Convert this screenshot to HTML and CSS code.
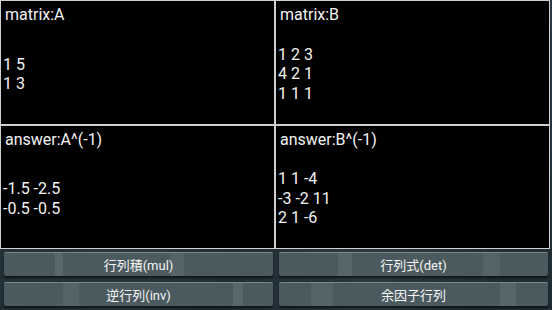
FILE: index.html
```html
<html>
    <head>
        <title>Matrix</title>
        <meta name="viewport" content="width=device-width, initial-scale=1.0">
        <link rel="stylesheet" href="styles.css">
    </head>
    <body>
        <div class="panels">
            <div class="panel">
                <div class="title">matrix:A</div>
                <div class="values">
                    <div>1 5</div>
                    <div>1 3</div>
                </div>
            </div>
            <div class="panel">
                <div class="title">matrix:B</div>
                <div class="values">
                    <div>1 2 3</div>
                    <div>4 2 1</div>
                    <div>1 1 1</div>
                </div>
            </div>
            <div class="panel">
                <div class="title">answer:A^(-1)</div>
                <div class="values">
                    <div>-1.5 -2.5</div>
                    <div>-0.5 -0.5</div>
                </div>
            </div>
            <div class="panel">
                <div class="title">answer:B^(-1)</div>
                <div class="values">
                    <div>1 1 -4</div>
                    <div>-3 -2 11</div>
                    <div>2 1 -6</div>
                </div>
            </div>
        </div>
        <div class="buttons">
            <button class="btn b1">行列積(mul)</button>
            <button class="btn b2">行列式(det)</button>
            <button class="btn b3">逆行列(inv)</button>
            <button class="btn b4">余因子行列</button>
        </div>
    </body>
</html>
```

FILE: styles.css
```css
* {
    box-sizing: border-box;
    font-family: Roboto, "Noto Sans CJK JP", sans-serif;
}

html, body {
    margin: 0;
    padding: 0;
    width: 552px;
    height: 310px;
    overflow: hidden;
}

body {
    background-color: #22323a;
    background-image:
        linear-gradient(100deg, transparent 0%, rgba(255,255,255,0.04) 30%, transparent 45%, rgba(255,255,255,0.05) 70%, transparent 90%),
        linear-gradient(180deg, #2a3a42 0%, #1e2c33 100%);
}

.panels {
    width: 550px;
    display: grid;
    grid-template-columns: 1fr 1fr;
    grid-template-rows: 125px 124px;
    background: #000;
}

.panel {
    border: 1px solid #cfcfcf;
    background: #000;
    color: #f2f2f2;
    font-size: 16px;
    display: flex;
    flex-direction: column;
    padding: 3px 0 0 2px;
}

.title {
    padding-left: 2px;
    line-height: 22px;
}

.values {
    flex: 1;
    display: flex;
    flex-direction: column;
    justify-content: center;
    line-height: 19.5px;
    padding-bottom: 2px;
}

.buttons {
    display: grid;
    grid-template-columns: 1fr 1fr;
    grid-template-rows: 24px 24px;
    column-gap: 6px;
    row-gap: 6px;
    padding: 3px 4px 0 4px;
}

.btn {
    border: 0;
    border-top: 1px solid #7a888d;
    border-radius: 2px;
    color: #f4f4f4;
    font-size: 13px;
    padding: 0;
    background-color: #4a5a5f;
    box-shadow: 0 2px 2px rgba(0,0,0,0.55);
}

.b1 {
    background-image: linear-gradient(90deg, transparent 19%, rgba(255,255,255,0.08) 19%, rgba(255,255,255,0.08) 22%, transparent 22%, transparent 62%, rgba(255,255,255,0.06) 62%, rgba(255,255,255,0.06) 67%, transparent 67%);
}

.b2 {
    background-image: linear-gradient(90deg, transparent 22%, rgba(255,255,255,0.07) 22%, rgba(255,255,255,0.07) 27%, transparent 27%, transparent 76%, rgba(255,255,255,0.06) 76%, rgba(255,255,255,0.06) 82%, transparent 82%);
}

.b3 {
    background-image: linear-gradient(90deg, transparent 22%, rgba(255,255,255,0.06) 22%, rgba(255,255,255,0.06) 28%, transparent 28%, transparent 85%, rgba(255,255,255,0.08) 85%, rgba(255,255,255,0.08) 89%, transparent 89%);
}

.b4 {
    background-image: linear-gradient(90deg, transparent 12%, rgba(255,255,255,0.06) 12%, rgba(255,255,255,0.06) 20%, transparent 20%, transparent 82%, rgba(255,255,255,0.07) 82%, rgba(255,255,255,0.07) 88%, transparent 88%);
}
```
